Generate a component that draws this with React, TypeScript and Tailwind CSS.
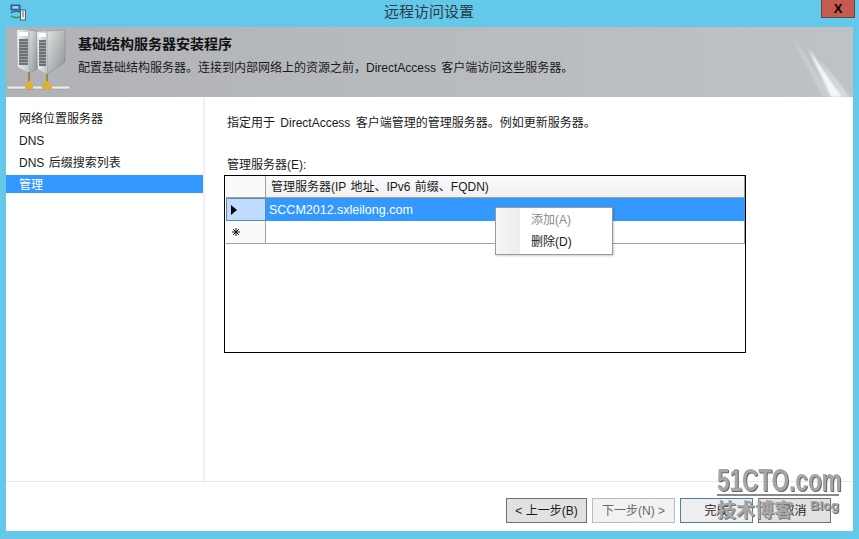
const cjk = "font-['Liberation_Sans','Noto_Sans_CJK_SC',sans-serif]";

function AppIcon() {
  return (
    <svg width="18" height="18" viewBox="0 0 18 18">
      <rect x="2" y="2" width="9" height="5" fill="#3f6fc0" stroke="#24417a" strokeWidth="0.8" />
      <rect x="3.5" y="3.2" width="6" height="2.4" fill="#a8d4f5" />
      <path d="M2 10c2 -2 6 -2 10 -1" stroke="#1f6f8f" strokeWidth="1.6" fill="none" />
      <path d="M2 13c3 2 6 2 9 1" stroke="#3c9a5c" strokeWidth="1.6" fill="none" />
      <rect x="11.5" y="7" width="5" height="10" fill="#e8ecef" stroke="#3c4650" strokeWidth="0.8" />
      <path d="M13 9h2M13 11h2M13 13h2" stroke="#3c4650" strokeWidth="0.8" />
    </svg>
  );
}

function ServerIcon() {
  const slats = [13, 16, 19, 22, 25, 28, 31, 34, 37];
  return (
    <svg width="66" height="70" viewBox="0 0 66 70" className="shrink-0">
      <defs>
        <linearGradient id="front" x1="0" x2="1" y1="0" y2="0">
          <stop offset="0" stopColor="#eef0f0" />
          <stop offset="1" stopColor="#c2c6c8" />
        </linearGradient>
        <linearGradient id="side" x1="0" x2="1" y1="0" y2="1">
          <stop offset="0" stopColor="#dfe2e2" />
          <stop offset="1" stopColor="#8b9294" />
        </linearGradient>
      </defs>
      <path d="M23 3L31 4V42L23 46z" fill="url(#side)" stroke="#7f8486" strokeWidth="0.5" />
      <path d="M11 3H23V46L12 40z" fill="url(#front)" />
      <rect x="13" y="5" width="9" height="4" fill="#ffffff" />
      <rect x="13" y="12" width="9" height="26" fill="#9a9fa3" />
      {slats.map((y) => (
        <path key={y} d={`M13 ${y}h9`} stroke="#4f555a" strokeWidth="1.2" />
      ))}
      <path d="M41 4L59 3V35L41 47z" fill="url(#side)" stroke="#7f8486" strokeWidth="0.5" />
      <path d="M31 5L41 4V47L32 42z" fill="url(#front)" />
      <rect x="33" y="6" width="7" height="4" fill="#ffffff" />
      <rect x="33" y="13" width="7" height="26" fill="#9a9fa3" />
      {slats.map((y) => (
        <path key={y} d={`M33 ${y + 1}h7`} stroke="#4f555a" strokeWidth="1.2" />
      ))}
      <rect x="1" y="59" width="63" height="3" fill="#e8eaea" stroke="#8e9395" strokeWidth="0.5" />
      <path d="M23 45v10M41 47v8" stroke="#9a7a24" strokeWidth="1.5" />
      <path d="M22 54h2l3 5v3H19v-3zM40 54h2l4 5v3H36v-3z" fill="#e2ad30" />
    </svg>
  );
}

function HeaderStreaks() {
  return (
    <svg width="70" height="70" viewBox="0 0 70 70" className="pointer-events-none absolute right-0 top-0">
      <defs>
        <filter id="soft">
          <feGaussianBlur stdDeviation="1" />
        </filter>
      </defs>
      <g filter="url(#soft)">
        <path d="M8 8C20 24 34 46 48 70H40C30 50 18 28 8 8z" fill="#ffffff" fillOpacity="0.2" />
        <path d="M26 22C36 36 46 52 60 70H48C40 52 32 38 26 22z" fill="#ffffff" fillOpacity="0.85" />
        <path d="M36 32C46 44 58 58 67 70H61C53 58 44 46 36 32z" fill="#ffffff" fillOpacity="0.4" />
      </g>
    </svg>
  );
}

function Button({ label, tone, className }: { label: string; tone: string; className: string }) {
  return (
    <div className={`flex h-[25px] items-center justify-center border text-[12px] ${tone} ${className}`}>
      {label}
    </div>
  );
}

export default function App() {
  const steps = ["网络位置服务器", "DNS", "DNS 后缀搜索列表"];

  return (
    <div className={`relative flex h-[539px] w-[859px] flex-col overflow-hidden bg-[#63c8ea] text-[#1a1a1a] ${cjk}`}>
      <div className="flex h-[27px] shrink-0 items-start justify-between pl-[9px] pr-[4px]">
        <div className="pt-[3px]">
          <AppIcon />
        </div>
        <div className="pl-[10px] pt-[2px] text-[15px] leading-[20px] text-[#2b3c44]">远程访问设置</div>
        <div className="flex h-[18px] w-[34px] items-center justify-center border border-t-0 border-[#5a4a4a] bg-[#c75a50] text-[13px] font-bold leading-none text-black">
          X
        </div>
      </div>

      <div className="mx-[6px] mb-[8px] flex flex-1 flex-col bg-white">
        <div className="relative flex h-[70px] shrink-0 overflow-hidden bg-gradient-to-r from-[#b0b2b5] via-[#b8bbbd] to-[#bec2c5]">
          <ServerIcon />
          <div className="pl-[6px]">
            <div className="pt-[7px] text-[14px] font-bold leading-[20px] text-[#111]">基础结构服务器安装程序</div>
            <div className="pt-[6px] text-[12px] leading-[16px] text-[#1a1a1a] [word-spacing:2px]">
              配置基础结构服务器。连接到内部网络上的资源之前，DirectAccess 客户端访问这些服务器。
            </div>
          </div>
          <HeaderStreaks />
        </div>

        <div className="flex min-h-0 flex-1">
          <div className="w-[197px] shrink-0 pt-[10px] text-[12px] [word-spacing:1px]">
            {steps.map((s) => (
              <div key={s} className="flex h-[22px] items-center pl-[13px] pt-[1px]">
                {s}
              </div>
            ))}
            <div className="mt-[2px] flex h-[18px] items-center bg-[#3399ff] pl-[13px] pt-[1px] text-white">管理</div>
          </div>
          <div className="w-[2px] shrink-0 bg-[#f0f0f0]" />
          <div className="flex-1 pl-[19px] pt-[18px]">
            <div className="pl-[3px] text-[12px] leading-[16px] [word-spacing:2px]">
              指定用于 DirectAccess 客户端管理的管理服务器。例如更新服务器。
            </div>
            <div className="pl-[3px] pt-[26px] text-[12px] leading-[17px]">管理服务器(E):</div>
            <div className="mt-[1px] h-[178px] w-[522px] border border-black bg-white">
              <div className="grid grid-cols-[40px_1fr] pl-[1px] text-[12px]">
                <div className="h-[22px] border-b border-r border-[#a0a0a0] bg-[#fafafa]" />
                <div className="flex h-[22px] items-center border-b border-r border-[#a0a0a0] bg-gradient-to-b from-[#fbfbfb] to-[#f0f0f0] pl-[5px] [word-spacing:1px]">
                  管理服务器(IP 地址、IPv6 前缀、FQDN)
                </div>
                <div className="flex h-[23px] items-center border border-[#5b8fa8] bg-[#bfdcff] pl-[4px]">
                  <svg width="6" height="10" viewBox="0 0 6 10">
                    <path d="M0 0l6 5l-6 5z" fill="#000" />
                  </svg>
                </div>
                <div className="flex h-[23px] items-center bg-[#3399ff] pl-[3px] pt-[1px] text-[12.5px] text-white">
                  SCCM2012.sxleilong.com
                </div>
                <div className="flex h-[23px] items-center border-b border-r border-[#a0a0a0] bg-[#fafafa] pl-[5px]">
                  <svg width="10" height="10" viewBox="0 0 10 10">
                    <path d="M5 1v8M1 5h8M2 2l6 6M8 2l-6 6" stroke="#111" strokeWidth="1" />
                  </svg>
                </div>
                <div className="h-[23px] border-b border-r border-[#a0a0a0] bg-white" />
              </div>
            </div>
          </div>
        </div>

        <div className="flex h-[50px] shrink-0 items-start justify-end gap-[5px] border-t border-[#e8e8e8] pr-[22px] pt-[16px]">
          <Button label="< 上一步(B)" tone="border-[#707070] bg-[#e1e1e1]" className="w-[81px]" />
          <Button label="下一步(N) >" tone="border-[#bcbcbc] bg-[#f2f2f2] text-[#6a6a6a]" className="w-[83px]" />
          <Button label="完成" tone="border-[#4a7fa8] bg-[#eeeeee]" className="w-[73px]" />
          <Button label="取消" tone="border-[#707070] bg-[#e1e1e1]" className="w-[73px]" />
        </div>
      </div>

      <div className="absolute left-[495px] top-[207px] flex h-[48px] w-[118px] border border-[#9a9a9a] bg-white text-[12px] shadow-[1px_1px_2px_rgba(0,0,0,0.2)]">
        <div className="w-[24px] bg-gradient-to-r from-[#f6f6f6] to-[#ececec]" />
        <div className="pl-[11px] pt-[1px] leading-[22px]">
          <div className="text-[#8a8a8a]">添加(A)</div>
          <div>删除(D)</div>
        </div>
      </div>

      <div className="absolute left-[717px] top-[476px] w-[122px] border-b-2 border-[#8a8a8a] pb-[2px]">
        <div className="origin-bottom scale-y-[1.4] whitespace-nowrap font-['Liberation_Sans',sans-serif] text-[22.5px] font-bold leading-[16px] text-[#a6a6a6] [text-shadow:1px_1px_0_#666]">
          51CTO.com
        </div>
      </div>
      <div className="absolute left-[717px] top-[498px] text-[19px] font-bold leading-[26px] text-[#a8a8a8] [text-shadow:1px_1px_0_#777]">
        技术博客
      </div>
      <div className="absolute left-[810px] top-[498px] font-['Liberation_Sans',sans-serif] text-[13px] font-bold leading-[16px] text-[#a6a6a6] [text-shadow:1px_1px_0_#666]">
        Blog
      </div>
    </div>
  );
}
